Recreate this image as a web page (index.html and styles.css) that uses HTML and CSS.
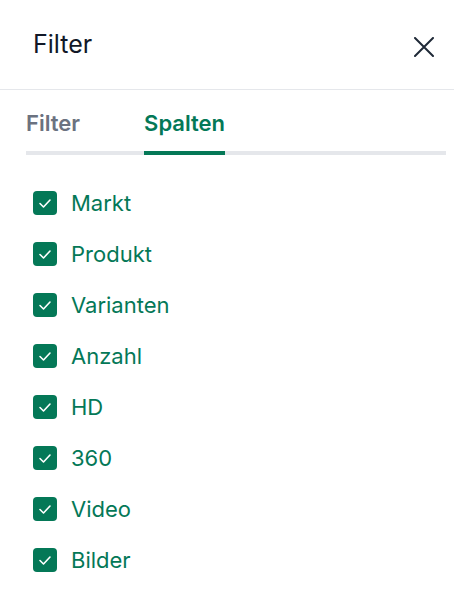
FILE: index.html
```html
<!DOCTYPE html>
<html lang="de">
<head>
<meta charset="utf-8">
<link rel="stylesheet" href="styles.css">
</head>
<body>
<div class="panel">
  <header class="header">
    <h1 class="title">Filter</h1>
    <button class="close" aria-label="Schließen">
      <svg width="20" height="20" viewBox="0 0 20 20"><path d="M1 1 L19 19 M19 1 L1 19" stroke="#1f2937" stroke-width="2" stroke-linecap="round" fill="none"/></svg>
    </button>
  </header>
  <nav class="tabs">
    <span class="tab">Filter</span>
    <span class="tab active">Spalten</span>
  </nav>
  <ul class="list">
    <li class="item"><span class="box"><svg viewBox="0 0 24 24"><path d="M7 12.5 L10.5 16 L17 9" stroke="#fff" stroke-width="1.6" fill="none" stroke-linecap="round" stroke-linejoin="round"/></svg></span>Markt</li>
    <li class="item"><span class="box"><svg viewBox="0 0 24 24"><path d="M7 12.5 L10.5 16 L17 9" stroke="#fff" stroke-width="1.6" fill="none" stroke-linecap="round" stroke-linejoin="round"/></svg></span>Produkt</li>
    <li class="item"><span class="box"><svg viewBox="0 0 24 24"><path d="M7 12.5 L10.5 16 L17 9" stroke="#fff" stroke-width="1.6" fill="none" stroke-linecap="round" stroke-linejoin="round"/></svg></span>Varianten</li>
    <li class="item"><span class="box"><svg viewBox="0 0 24 24"><path d="M7 12.5 L10.5 16 L17 9" stroke="#fff" stroke-width="1.6" fill="none" stroke-linecap="round" stroke-linejoin="round"/></svg></span>Anzahl</li>
    <li class="item"><span class="box"><svg viewBox="0 0 24 24"><path d="M7 12.5 L10.5 16 L17 9" stroke="#fff" stroke-width="1.6" fill="none" stroke-linecap="round" stroke-linejoin="round"/></svg></span>HD</li>
    <li class="item"><span class="box"><svg viewBox="0 0 24 24"><path d="M7 12.5 L10.5 16 L17 9" stroke="#fff" stroke-width="1.6" fill="none" stroke-linecap="round" stroke-linejoin="round"/></svg></span>360</li>
    <li class="item"><span class="box"><svg viewBox="0 0 24 24"><path d="M7 12.5 L10.5 16 L17 9" stroke="#fff" stroke-width="1.6" fill="none" stroke-linecap="round" stroke-linejoin="round"/></svg></span>Video</li>
    <li class="item"><span class="box"><svg viewBox="0 0 24 24"><path d="M7 12.5 L10.5 16 L17 9" stroke="#fff" stroke-width="1.6" fill="none" stroke-linecap="round" stroke-linejoin="round"/></svg></span>Bilder</li>
  </ul>
</div>
</body>
</html>
```
FILE: styles.css
```css
* { box-sizing: border-box; }
html, body { margin: 0; padding: 0; background: #fff; }
body { font-family: Inter, "Noto Sans", sans-serif; }
.panel { width: 454px; }
.header {
  height: 90px;
  border-bottom: 1px solid #e5e7eb;
  display: flex;
  align-items: center;
  justify-content: space-between;
  padding: 0 20px 0 33px;
}
.title {
  margin: 0;
  font-size: 25px;
  font-weight: 400;
  color: #111827;
  line-height: 1;
  margin-top: 0;
}
.close {
  border: 0;
  background: none;
  padding: 0;
  width: 20px;
  height: 20px;
  display: flex;
  margin-top: 4px;
}
.tabs {
  display: flex;
  gap: 64px;
  margin: 20px 8px 0 26px;
  border-bottom: 4px solid #e5e7eb;
}
.tab {
  font-size: 22px;
  font-weight: 600;
  color: #6b7280;
  line-height: 1;
  padding-top: 2px;
  padding-bottom: 17px;
  margin-bottom: -4px;
  border-bottom: 4px solid transparent;
}
.tab.active {
  color: #047857;
  border-bottom-color: #047857;
}
.list {
  list-style: none;
  margin: 0;
  padding: 36px 0 0 33px;
  display: flex;
  flex-direction: column;
  gap: 27px;
}
.item {
  display: flex;
  align-items: center;
  gap: 14px;
  font-size: 22px;
  color: #047857;
  line-height: 24px;
  height: 24px;
}
.box {
  width: 24px;
  height: 24px;
  border-radius: 4px;
  background: #047857;
  display: flex;
  flex: none;
}
.box svg { width: 24px; height: 24px; }
```
